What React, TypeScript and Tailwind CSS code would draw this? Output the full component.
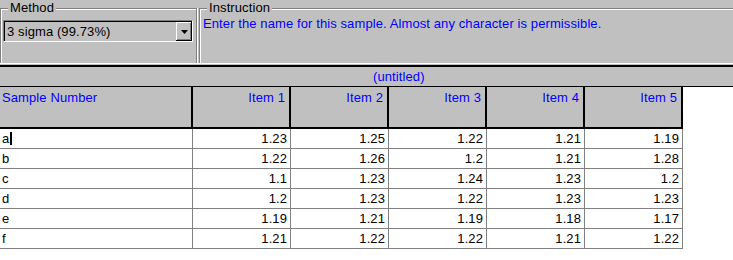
import React from "react";

const rows: Array<[string, string[]]> = [
  ["a", ["1.23", "1.25", "1.22", "1.21", "1.19"]],
  ["b", ["1.22", "1.26", "1.2", "1.21", "1.28"]],
  ["c", ["1.1", "1.23", "1.24", "1.23", "1.2"]],
  ["d", ["1.2", "1.23", "1.22", "1.23", "1.23"]],
  ["e", ["1.19", "1.21", "1.19", "1.18", "1.17"]],
  ["f", ["1.21", "1.22", "1.22", "1.21", "1.22"]],
];

const items = ["Item 1", "Item 2", "Item 3", "Item 4", "Item 5"];

function GroupLabel({ children }: { children: React.ReactNode }) {
  return (
    <span className="absolute left-[7px] -top-[9px] px-[2px] bg-[#c0c0c0] leading-[15px] text-black">
      {children}
    </span>
  );
}

export default function App() {
  return (
    <div className="w-[733px] h-[260px] bg-white overflow-hidden font-['Liberation_Sans',Arial,sans-serif] text-[13px] leading-[15px] tracking-[0.1px]">
      {/* top panel */}
      <div className="h-[63px] bg-[#c0c0c0] flex pt-[8px]">
        <div className="relative w-[197px] h-[55px] border-t border-l border-r border-[#808080] shadow-[inset_1px_1px_0_#fff,1px_0_0_#fff]">
          <GroupLabel>Method</GroupLabel>
          <div className="mt-[11px] ml-[2px] w-[190px] h-[22px] border border-t-[#808080] border-l-[#808080] border-b-white border-r-white">
            <div className="h-full border-t border-l border-black flex">
              <span className="flex-1 pl-[2px] pt-[2px] text-black">3 sigma (99.73%)</span>
              <div className="w-[16px] h-full bg-[#c0c0c0] border-r border-b border-black">
                <div className="h-full border-t border-l border-white flex items-center justify-center shadow-[inset_-1px_-1px_0_#808080]">
                  <svg width="7" height="4" viewBox="0 0 7 4">
                    <path d="M0 0h7L3.5 4z" fill="#000" />
                  </svg>
                </div>
              </div>
            </div>
          </div>
        </div>
        <div className="relative flex-1 ml-[2px] h-[55px] border-t border-l border-[#808080] shadow-[inset_1px_1px_0_#fff]">
          <GroupLabel>Instruction</GroupLabel>
          <p className="pt-[7px] pl-[3px] text-[#0000ff]">
            Enter the name for this sample. Almost any character is permissible.
          </p>
        </div>
      </div>
      <div className="h-px bg-white" />
      <div className="h-px bg-[#c0c0c0]" />
      <div className="h-[2px] bg-black" />

      {/* title band */}
      <div className="h-[20px] bg-[#c0c0c0] border-b border-black pl-[373px] pt-[2px] text-[#0000ff]">
        (untitled)
      </div>

      {/* table */}
      <div className="grid grid-cols-[193px_repeat(5,98px)]">
        <div className="h-[42px] bg-[#c0c0c0] border-r-2 border-b-2 border-black pl-[2px] pt-[3px] text-[#0000ff]">
          Sample Number
        </div>
        {items.map((it) => (
          <div
            key={it}
            className="h-[42px] bg-[#c0c0c0] border-r-2 border-b-2 border-black pr-[4px] pt-[3px] text-right text-[#0000ff]"
          >
            {it}
          </div>
        ))}
        {rows.map(([name, vals], ri) => (
          <React.Fragment key={name}>
            <div className="h-[20px] border-r border-b border-[#808080] pl-[2px] flex items-center text-black">
              {name}
              {ri === 0 && <span className="inline-block w-[2px] h-[13px] bg-black ml-[1px]" />}
            </div>
            {vals.map((v, i) => (
              <div
                key={i}
                className="h-[20px] border-r border-b border-[#808080] pr-[3px] flex items-center justify-end text-black"
              >
                {v}
              </div>
            ))}
          </React.Fragment>
        ))}
      </div>
    </div>
  );
}
